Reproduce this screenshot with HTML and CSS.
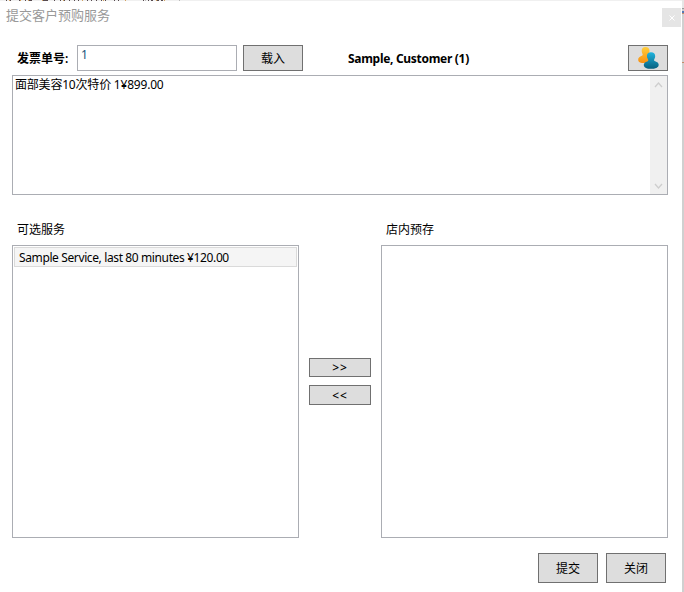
FILE: index.html
```html
<!DOCTYPE html>
<html lang="zh-CN">
<head>
<meta charset="utf-8">
<title>提交客户预购服务</title>
<link rel="stylesheet" href="styles.css">
</head>
<body>
<div class="window">
  <svg class="top-edge" width="684" height="1" viewBox="0 0 684 1" shape-rendering="crispEdges">
    <path stroke="#f0f0f0" d="M0 .5h684"/>
    <path stroke="#574b50" d="M6 .5h1m3 0h1m8 0h1m5 0h1m3 0h3m10 0h6m6 0h1m5 0h1m3 0h1m4 0h1m4 0h1m3 0h1m8 0h1m3 0h1m4 0h1m4 0h1m3 0h1m8 0h1m3 0h1m6 0h1m17 0h1m4 0h1m2 0h2m3 0h3m2 0h2"/>
    <path stroke="#d4a15e" d="M9 .5h1m10 0h1m7 0h1m13 0h1m20 0h1m18 0h1m20 0h1m21 0h1m30 0h1m7 0h1"/>
    <path stroke="#bbb" d="M145 .5h1m33 0h1"/>
  </svg>
  <header class="titlebar">
    <h1 class="title">提交客户预购服务</h1>
    <button class="close" aria-label="关闭"><svg width="6" height="6" viewBox="0 0 6 6"><path d="M.5 .5l5 5M5.500 .5l-5 5"/></svg></button>
  </header>
  <main class="content">
    <div class="invoice-row">
      <label class="label">发票单号:</label>
      <div class="input">1</div>
      <button class="btn load">载入</button>
      <strong class="customer">Sample, Customer (1)</strong>
      <button class="btn people" aria-label="客户">
        <svg width="22" height="22" viewBox="0 0 22 22">
          <defs>
            <linearGradient id="gold" x2="0" y2="1"><stop offset="0" stop-color="#ffcf3c"/><stop offset="1" stop-color="#f88e10"/></linearGradient>
            <linearGradient id="blue" x2="0" y2="1"><stop offset="0" stop-color="#20b4de"/><stop offset="1" stop-color="#07607f"/></linearGradient>
          </defs>
          <path fill="url(#gold)" d="M8.500 0C6 0 4.700 1.500 4.700 3.700c0 2.200 1 3 1 4.400C5.500 9.100 1.200 9.400 1.200 12.700c0 2.800 2.800 3.400 6.300 3.400S15 15.500 15 13c0-2.500-3.500-3.200-3.800-4.300 0-1.400 1.300-2.600 1.300-5C12.500 1.500 11 0 8.500 0z"/>
          <path fill="url(#blue)" d="M14 5.200c-2.700 0-4.100 1.600-4.100 3.900 0 2.300 1.400 3.100 1.400 4.600-.7 1-4.500 1.200-4.500 4.200 0 3 3.500 3.900 7.400 3.900s7.500-1.100 7.500-4.100c0-2.900-4-3.200-4.700-4.200 0-1.400 1.200-2.200 1.200-4.400s-1.500-3.900-4.200-3.900z"/>
        </svg>
      </button>
    </div>
    <div class="box invoice-list">
      <div class="invoice-item">面部美容10次特价 1¥899.00</div>
      <div class="scrollbar">
        <svg width="9" height="6" viewBox="0 0 9 6"><path d="M1 5l3.500-4L8 5"/></svg>
        <svg width="9" height="6" viewBox="0 0 9 6"><path d="M1 1l3.500 4L8 1"/></svg>
      </div>
    </div>
    <div class="transfer">
      <section class="panel">
        <h2 class="heading">可选服务</h2>
        <div class="box list"><div class="item">Sample Service, last 80 minutes ¥120.00</div></div>
      </section>
      <div class="arrows">
        <button class="btn arrow">&gt;&gt;</button>
        <button class="btn arrow back">&lt;&lt;</button>
      </div>
      <section class="panel">
        <h2 class="heading">店内预存</h2>
        <div class="box list"></div>
      </section>
    </div>
    <footer class="actions">
      <button class="btn action">提交</button>
      <button class="btn action">关闭</button>
    </footer>
  </main>
  <svg class="right-edge" width="2" height="592" viewBox="0 0 2 592" shape-rendering="crispEdges">
    <path fill="#e6e6e6" d="M0 0h2v9H0z"/>
    <path fill="#d0d0d0" d="M0 9h2v583H0z"/>
    <path fill="#999" d="M0 8h2v1H0z"/>
    <path fill="#5379b5" d="M0 11h2v2H0z"/>
    <path fill="#c58a68" d="M0 13h2v1H0zM0 62h2v1H0z"/>
  </svg>
</div>
</body>
</html>
```
FILE: styles.css
```css
* { box-sizing: border-box; }
body {
  margin: 0;
  background: #fff;
  color: #000;
  font: 12px/16px "Noto Sans", "Noto Sans CJK SC", sans-serif;
  overflow: hidden;
}
h1, h2 { margin: 0; font-weight: 400; }
.window { position: relative; width: 684px; height: 592px; }
.top-edge { display: block; }
.right-edge { position: absolute; top: 0; right: 0; }
.titlebar { display: flex; justify-content: space-between; height: 44px; padding: 0 2px 0 6px; }
.title { font-size: 13px; line-height: 18px; padding-top: 5px; color: #999; }
.close {
  display: flex; align-items: center; justify-content: center;
  width: 19px; height: 19px; margin: 7px 1px 0 0; padding: 0;
  border: 0; background: #e5e5e5;
}
.close svg { fill: none; stroke: #fff; }
.content { padding: 0 16px 0 12px; }
.invoice-row { display: flex; height: 26px; }
.label { width: 65px; padding: 6px 0 0 5px; font-weight: 600; white-space: nowrap; }
.input { width: 160px; border: 1px solid #abadb3; padding: 1px 3px; color: #17557c; }
.btn {
  display: flex; align-items: center; justify-content: center;
  padding: 0; border: 1px solid #707070; background: #ddd; color: #000; font: inherit;
}
.load { width: 60px; margin-left: 6px; padding-top: 1px; }
.customer { margin-left: 45px; padding-top: 6px; font-weight: 700; letter-spacing: -.3px; white-space: nowrap; }
.people { width: 40px; margin-left: auto; }
.box { border: 1px solid #abadb3; }
.invoice-list { display: flex; justify-content: space-between; height: 120px; margin-top: 4px; }
.invoice-item { padding: 1px 2px; letter-spacing: -.2px; }
.scrollbar {
  display: flex; flex-direction: column; align-items: center; justify-content: space-between;
  width: 17px; padding: 6px 0 5px; background: #f0f0f0;
}
.scrollbar svg { fill: none; stroke: #cecece; stroke-width: 1.3; }
.transfer { display: flex; margin-top: 25px; }
.panel { width: 287px; }
.heading { height: 25px; padding: 1px 0 0 5px; font-size: 12px; line-height: 18px; }
.list { height: 293px; padding: 1px; }
.item { height: 20px; padding: 0 4px; border: 1px solid #dadada; background: #f5f5f5; line-height: 20px; white-space: nowrap; letter-spacing: -.38px; }
.arrows { display: flex; flex-direction: column; gap: 8px; width: 82px; padding: 138px 10px 0; }
.arrow { height: 19px; padding-top: 1px; letter-spacing: 1px; font-weight: 500; }
.back { height: 20px; }
.actions { display: flex; justify-content: flex-end; gap: 8px; margin-top: 15px; padding-right: 2px; }
.action { width: 60px; height: 30px; padding-top: 1px; }
```
